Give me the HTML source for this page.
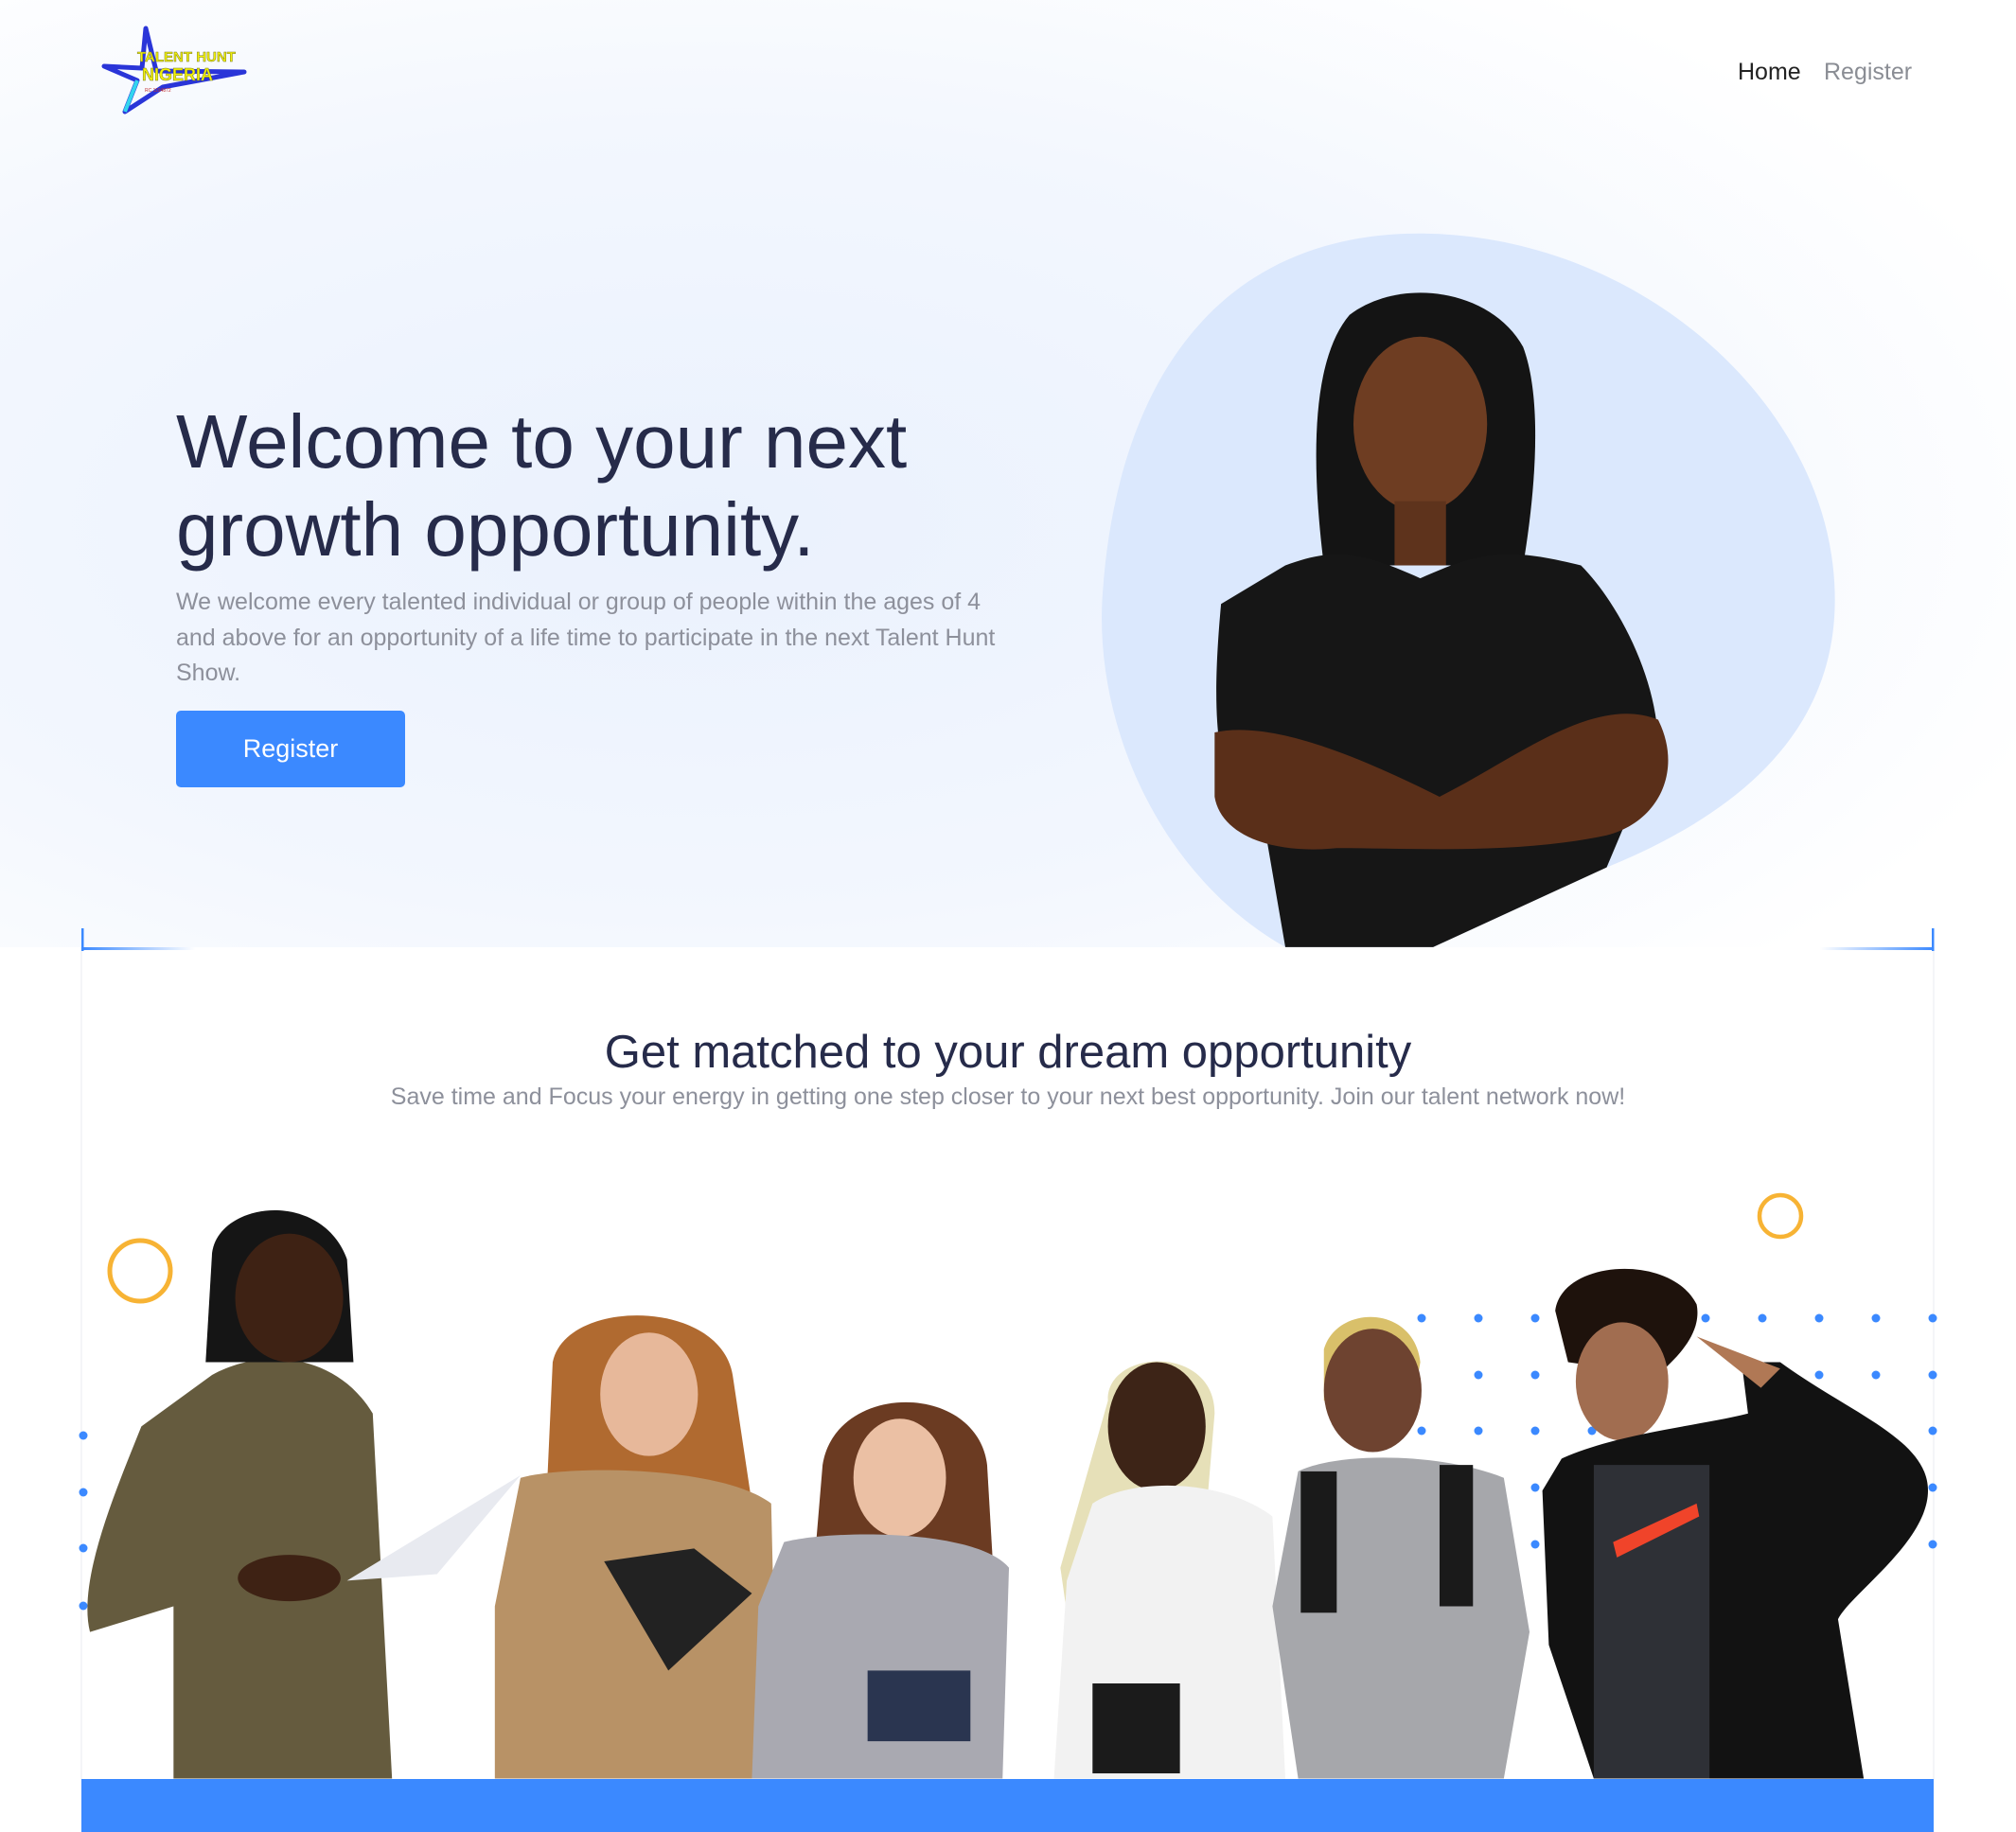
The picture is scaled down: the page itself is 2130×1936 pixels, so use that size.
<!DOCTYPE html>
<html><head><meta charset="utf-8">
<style>
html,body{margin:0;padding:0;}
body{width:2130px;height:1936px;position:relative;overflow:hidden;background:#fff;font-family:"Liberation Sans",Arial,sans-serif;}
svg.bg{position:absolute;left:0;top:0;}
.t{position:absolute;white-space:nowrap;}
</style></head><body>
<svg class="bg" width="2130" height="1936" viewBox="0 0 2130 1936">
<defs>
<radialGradient id="hg" cx="0.35" cy="0.55" r="0.7">
<stop offset="0" stop-color="#eaf1fd"/><stop offset="0.6" stop-color="#f3f7fe"/><stop offset="1" stop-color="#ffffff"/>
</radialGradient>
<linearGradient id="ll" x1="0" x2="1"><stop offset="0" stop-color="#3b89ff"/><stop offset="1" stop-color="#3b89ff" stop-opacity="0"/></linearGradient>
<linearGradient id="lr" x1="1" x2="0"><stop offset="0" stop-color="#3b89ff"/><stop offset="1" stop-color="#3b89ff" stop-opacity="0"/></linearGradient>
</defs>
<rect x="0" y="0" width="2130" height="1001" fill="url(#hg)"/>
<rect x="86" y="1001" width="1957" height="935" fill="#fff"/>
<line x1="86" y1="1001" x2="86" y2="1880" stroke="#f0f2f6" stroke-width="1.5"/>
<line x1="2043" y1="1001" x2="2043" y2="1880" stroke="#f0f2f6" stroke-width="1.5"/>
<rect x="86" y="981" width="2.5" height="24" fill="#3b89ff"/>
<rect x="86" y="1001" width="120" height="3" fill="url(#ll)"/>
<rect x="2041" y="981" width="2.5" height="24" fill="#3b89ff"/>
<rect x="1923" y="1001" width="120" height="3" fill="url(#lr)"/>
<g fill="#3b89ff">
<circle cx="1502" cy="1393" r="4.5"/><circle cx="1562" cy="1393" r="4.5"/><circle cx="1622" cy="1393" r="4.5"/><circle cx="1802" cy="1393" r="4.5"/><circle cx="1862" cy="1393" r="4.5"/><circle cx="1922" cy="1393" r="4.5"/><circle cx="1982" cy="1393" r="4.5"/><circle cx="2042" cy="1393" r="4.5"/>
<circle cx="1562" cy="1453" r="4.5"/><circle cx="1622" cy="1453" r="4.5"/><circle cx="1922" cy="1453" r="4.5"/><circle cx="1982" cy="1453" r="4.5"/><circle cx="2042" cy="1453" r="4.5"/>
<circle cx="1502" cy="1512" r="4.5"/><circle cx="1562" cy="1512" r="4.5"/><circle cx="1622" cy="1512" r="4.5"/><circle cx="1682" cy="1512" r="4.5"/><circle cx="2042" cy="1512" r="4.5"/>
<circle cx="1622" cy="1572" r="4.5"/><circle cx="1922" cy="1572" r="4.5"/><circle cx="2042" cy="1572" r="4.5"/>
<circle cx="1622" cy="1632" r="4.5"/><circle cx="1922" cy="1632" r="4.5"/><circle cx="1982" cy="1632" r="4.5"/><circle cx="2042" cy="1632" r="4.5"/>
<circle cx="88" cy="1517" r="4.5"/><circle cx="88" cy="1577" r="4.5"/><circle cx="88" cy="1636" r="4.5"/><circle cx="88" cy="1697" r="4.5"/>
</g>
<circle cx="148" cy="1343" r="32" fill="none" stroke="#f7b334" stroke-width="5"/>
<circle cx="1881" cy="1285" r="22" fill="none" stroke="#f7b334" stroke-width="4.5"/>
<g transform="scale(1.358)">
<path d="M1000 737 C 900 680 850 560 858 460 C 868 320 930 190 1090 182 C 1260 175 1410 300 1426 440 C 1440 560 1360 630 1250 675 L 1115 737 Z" fill="#dbe8fd"/>
<path d="M1050 245 C 1090 215 1160 225 1185 270 C 1200 310 1195 380 1185 440 L 1030 440 C 1020 360 1020 280 1050 245Z" fill="#141414"/>
<ellipse cx="1105" cy="330" rx="52" ry="68" fill="#6e3d22"/>
<rect x="1085" y="390" width="40" height="50" fill="#5e331c"/>
<path d="M1000 440 C 1040 425 1060 430 1105 450 C 1150 430 1170 425 1230 440 C 1260 470 1290 530 1290 580 L 1250 675 L 1115 737 L 1000 737 L 985 650 C 950 620 940 580 950 470 Z" fill="#161616"/>
<path d="M945 570 C 990 560 1060 590 1120 620 C 1180 590 1240 540 1290 560 C 1310 600 1290 640 1250 650 C 1180 665 1100 660 1040 660 C 990 665 950 650 945 620 Z" fill="#5a2f19"/>
<path d="M165 1070 C 200 1050 260 1050 290 1100 L 305 1384 L 135 1384 L 135 1250 L 70 1270 C 60 1230 90 1160 110 1110 Z" fill="#655b3e"/>
<path d="M165 975 C 170 935 250 925 270 980 L 275 1060 L 160 1060 Z" fill="#151515"/>
<ellipse cx="225" cy="1010" rx="42" ry="50" fill="#3e2214"/>
<path d="M270 1230 L 405 1148 L 340 1225 Z" fill="#e8eaf0"/>
<ellipse cx="225" cy="1228" rx="40" ry="18" fill="#3e2214"/>
<path d="M430 1060 C 440 1010 560 1010 570 1070 L 585 1170 L 425 1170 Z" fill="#b06a30"/>
<ellipse cx="505" cy="1085" rx="38" ry="48" fill="#e7b89a"/>
<path d="M405 1150 C 440 1140 560 1140 600 1170 L 605 1384 L 385 1384 L 385 1250 Z" fill="#b89266"/>
<path d="M470 1215 L 540 1205 L 585 1240 L 520 1300 Z" fill="#222"/>
<path d="M640 1140 C 650 1075 760 1075 768 1140 L 775 1260 L 630 1260 Z" fill="#6b3b22"/>
<ellipse cx="700" cy="1150" rx="36" ry="46" fill="#ebc0a4"/>
<path d="M610 1200 C 650 1190 760 1190 785 1220 L 780 1384 L 585 1384 L 590 1250 Z" fill="#a9a9b1"/>
<rect x="675" y="1300" width="80" height="55" fill="#2a3550"/>
<path d="M862 1090 C 860 1050 945 1045 945 1100 L 940 1160 L 835 1290 L 825 1220 Z" fill="#e6e0b8"/>
<ellipse cx="900" cy="1110" rx="38" ry="50" fill="#3d2417"/>
<path d="M850 1170 C 880 1150 950 1150 990 1180 L 1000 1384 L 820 1384 L 830 1230 Z" fill="#f2f2f2"/>
<rect x="850" y="1310" width="68" height="70" fill="#1b1b1b"/>
<path d="M1030 1050 C 1040 1015 1100 1015 1105 1060 L 1100 1090 L 1030 1090 Z" fill="#d9c06a"/>
<ellipse cx="1068" cy="1082" rx="38" ry="48" fill="#6e4330"/>
<path d="M1010 1145 C 1040 1130 1120 1130 1170 1150 L 1190 1270 L 1170 1384 L 1010 1384 L 990 1250 Z" fill="#a6a7ab"/>
<rect x="1012" y="1145" width="28" height="110" fill="#1a1a1a"/>
<rect x="1120" y="1140" width="26" height="110" fill="#1a1a1a"/>
<path d="M1210 1020 C 1215 980 1300 975 1320 1015 C 1325 1040 1300 1060 1290 1070 L 1220 1060 Z" fill="#1e120c"/>
<ellipse cx="1262" cy="1075" rx="36" ry="46" fill="#a16d50"/>
<path d="M1215 1135 C 1260 1115 1320 1110 1360 1100 L 1355 1060 L 1385 1060 C 1440 1100 1500 1120 1500 1160 C 1500 1200 1440 1240 1430 1260 L 1450 1384 L 1240 1384 L 1205 1280 L 1200 1160 Z" fill="#121212"/>
<rect x="1240" y="1140" width="90" height="244" fill="#2e3036"/>
<path d="M1255 1200 L 1320 1170 L 1322 1180 L 1258 1212 Z" fill="#f0442a"/>
<path d="M1320 1040 L 1385 1065 L 1370 1080 Z" fill="#b07855"/>
</g>
<rect x="86" y="1880" width="1957" height="56" fill="#3b89ff"/>
<g>
<path d="M154 30 L 165 75 L 258 76 L 172 92 L 132 118 L 145 85 L 110 70 L 150 72 Z" fill="none" stroke="#2a35d8" stroke-width="5" stroke-linejoin="round"/>
<path d="M145 85 L 132 118" stroke="#33d5ee" stroke-width="4"/>
<text x="145" y="65" font-family="Liberation Sans" font-weight="bold" font-size="15" fill="#f2f20a" stroke="#7a7a20" stroke-width="0.5">TALENT HUNT</text>
<text x="150" y="85" font-family="Liberation Sans" font-weight="bold" font-size="18" fill="#f2f20a" stroke="#7a7a20" stroke-width="0.5">NIGERIA</text>
<text x="153" y="97" font-family="Liberation Sans" font-size="5" fill="#c03030">RC 1194872</text>
</g>
</svg>

<div class="t" style="left:1836px;top:62px;font-size:25px;color:#222;">Home</div>
<div class="t" style="left:1927px;top:62px;font-size:25px;color:#8a8d94;">Register</div>

<div class="t" style="left:186px;top:420px;font-size:80px;line-height:93px;color:#262b4a;">Welcome to your next<br>growth opportunity.</div>
<div class="t" style="left:186px;top:618px;font-size:25px;line-height:37.5px;color:#8d909b;">We welcome every talented individual or group of people within the ages of 4<br>and above for an opportunity of a life time to participate in the next Talent Hunt<br>Show.</div>
<div style="position:absolute;left:186px;top:751px;width:242px;height:81px;background:#3b89ff;border-radius:5px;color:#fff;font-size:27px;line-height:81px;text-align:center;">Register</div>

<div class="t" style="left:0;width:2130px;text-align:center;top:1084px;font-size:49px;color:#262b4a;">Get matched to your dream opportunity</div>
<div class="t" style="left:0;width:2130px;text-align:center;top:1145px;font-size:25px;color:#8d909b;">Save time and Focus your energy in getting one step closer to your next best opportunity. Join our talent network now!</div>
</body></html>
